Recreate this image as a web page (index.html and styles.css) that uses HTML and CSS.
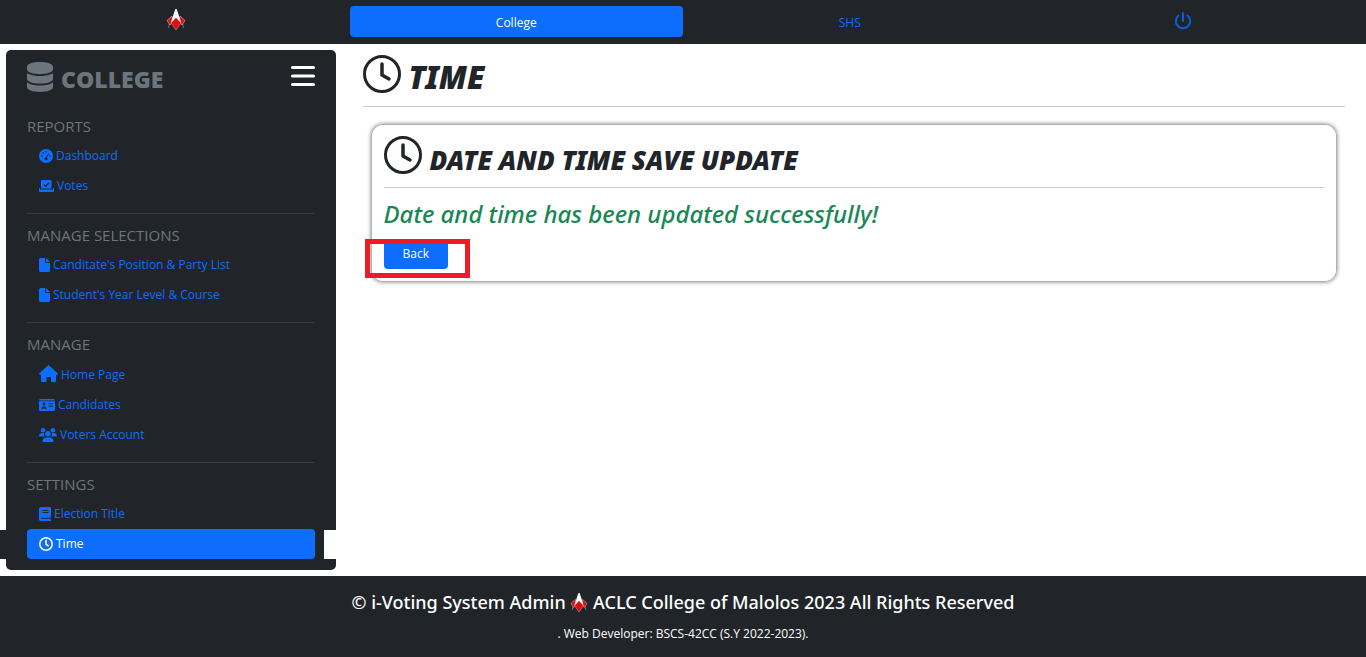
FILE: index.html
```html
<!DOCTYPE html>
<html lang="en">
<head>
<meta charset="utf-8">
<meta name="viewport" content="width=device-width, initial-scale=1">
<title>i-Voting System Admin</title>
<link rel="stylesheet" href="styles.css">
</head>
<body>
<svg class="sprite" aria-hidden="true">
  <symbol id="logo" viewBox="0 0 20 22">
    <path fill="none" stroke="#7f868d" stroke-width=".8" d="M4 13 2.300 19M16 13l1.700 6"/>
    <path fill="#d90f12" stroke="#f0d4d5" stroke-width=".5" d="M1 11.500 6 7l1 5-3 4zM19 11.500 14 7l-1 5 3 4z"/>
    <path fill="#f6f8fb" d="M9.300 0h1.400L15 13l-2 .5-3-4-3 4-2-.5z"/>
    <path fill="#e00c10" stroke="#f3c9ca" stroke-width=".4" d="M10 8.500 15 14l-5 7-5-7z"/>
  </symbol>
  <symbol id="clock" viewBox="0 0 38 38">
    <circle cx="19" cy="19" r="17.500" fill="none" stroke="currentColor" stroke-width="3"/>
    <path fill="none" stroke="currentColor" stroke-width="3.500" stroke-linecap="round" stroke-linejoin="round" d="M19 9v11l7 4"/>
  </symbol>
</svg>

<header class="topbar">
  <a class="topbar-link topbar-brand" href="#" aria-label="Home"><svg class="logo"><use href="#logo"/></svg></a>
  <a class="topbar-link is-active" href="#">College</a>
  <a class="topbar-link" href="#">SHS</a>
  <a class="topbar-link topbar-power" href="#" aria-label="Log out">
    <svg class="power" viewBox="0 0 18 18" fill="none" stroke="currentColor" stroke-width="2" stroke-linecap="round"><path d="M9 1v8M4.500 3.500a7.200 7.200 0 1 0 9 0"/></svg>
  </a>
</header>

<div class="layout">
  <aside class="sidebar">
    <div class="sidebar-head">
      <svg class="database" viewBox="0 0 448 512" fill="currentColor" preserveAspectRatio="none"><path d="M448 80v48c0 44.200-100.300 80-224 80S0 172.200 0 128V80C0 35.800 100.300 0 224 0s224 35.800 224 80zM393.200 214.700c20.800-7.400 39.900-16.900 54.800-28.600V288c0 44.200-100.300 80-224 80S0 332.200 0 288V186.100c14.900 11.800 34 21.200 54.800 28.600C99.700 230.700 159.500 240 224 240s124.300-9.300 169.200-25.300zM0 346.100c14.900 11.800 34 21.200 54.800 28.600C99.700 390.700 159.500 400 224 400s124.300-9.300 169.200-25.300c20.800-7.400 39.900-16.900 54.800-28.600V432c0 44.200-100.300 80-224 80S0 476.200 0 432v-85.900z"/></svg>
      <h2 class="sidebar-title">COLLEGE</h2>
      <button class="menu-button" type="button" aria-label="Toggle menu">
        <svg class="menu-icon" viewBox="0 0 24 20" stroke="currentColor" stroke-width="3" stroke-linecap="round"><path d="M1.500 1.500h21M1.500 10h21M1.500 18.500h21"/></svg>
      </button>
    </div>

    <nav>
      <section class="group">
        <h3 class="group-title">REPORTS</h3>
        <a class="item" href="#"><svg class="icon" viewBox="0 0 14 14"><circle cx="7" cy="7" r="7" fill="currentColor"/><path fill="none" stroke="#212529" stroke-linecap="round" d="M7 9.500 9.500 5"/><g fill="#212529"><circle cx="7" cy="9.800" r="1.500"/><circle cx="3" cy="7" r=".8"/><circle cx="4.300" cy="4" r=".8"/><circle cx="7" cy="2.700" r=".8"/><circle cx="11" cy="7" r=".8"/></g></svg>Dashboard</a>
        <a class="item" href="#"><svg class="icon icon-mid" viewBox="0 0 15 12"><path fill="currentColor" d="M3 0h8.500q1 0 1 1v7.500H2V1q0-1 1-1zM0 8h1v1.500h13V8h1v3q0 1-1 1H1q-1 0-1-1z"/><path fill="none" stroke="#212529" stroke-width="1.300" d="m5 4.500 1.700 1.800L10 2.800"/></svg>Votes</a>
      </section>
      <section class="group">
        <h3 class="group-title">MANAGE SELECTIONS</h3>
        <a class="item" href="#"><svg class="icon icon-narrow" viewBox="0 0 11 14"><path fill="currentColor" d="M1.500 0H6v4q0 1 1 1h4v7.500q0 1.500-1.500 1.500h-8Q0 14 0 12.500v-11Q0 0 1.500 0zM7 0l4 4H7z"/></svg>Canditate's Position &amp; Party List</a>
        <a class="item" href="#"><svg class="icon icon-narrow" viewBox="0 0 11 14"><path fill="currentColor" d="M1.500 0H6v4q0 1 1 1h4v7.500q0 1.500-1.500 1.500h-8Q0 14 0 12.500v-11Q0 0 1.500 0zM7 0l4 4H7z"/></svg>Student's Year Level &amp; Course</a>
      </section>
      <section class="group">
        <h3 class="group-title">MANAGE</h3>
        <a class="item" href="#"><svg class="icon icon-home" viewBox="0 0 19 19"><path fill="currentColor" d="M9.500 0 19 8.500q0 1.300-1 1.300h-1V17h-5v-5H7.500v5H2V9.800H1q-1 0-1-1.300z"/></svg>Home Page</a>
        <a class="item" href="#"><svg class="icon icon-card" viewBox="0 0 16 12"><path fill="currentColor" d="M1.500 0h13Q16 0 16 1.500H0Q0 0 1.500 0zM0 2.300h16v8.200q0 1.500-1.500 1.500h-13Q0 12 0 10.500z"/><g fill="#212529"><circle cx="5" cy="5" r="1.400"/><path d="M2.300 9.700Q2.300 7.200 5 7.200t2.700 2.500zM9.500 4.200H14v1H9.500zM9.500 6.700H14v1H9.500z"/></g></svg>Candidates</a>
        <a class="item" href="#"><svg class="icon icon-wide" viewBox="0 0 18 14" fill="currentColor"><circle cx="4" cy="2.200" r="2.200"/><circle cx="14" cy="2.200" r="2.200"/><circle cx="9" cy="5.800" r="2.700"/><path d="M0 8.500Q0 5 3 5h2q-.5 2 1 3.500zM18 8.500Q18 5 15 5h-2q.5 2-1 3.500zM3.500 14Q3.500 9.500 7 9.500h4q3.500 0 3.500 4.500z"/></svg>Voters Account</a>
      </section>
      <section class="group">
        <h3 class="group-title">SETTINGS</h3>
        <a class="item" href="#"><svg class="icon icon-book" viewBox="0 0 12 14"><path fill="currentColor" d="M2 0h9q1 0 1 1v8q0 1-.7 1v2.500H12V14H2q-2 0-2-2V2q0-2 2-2z"/><path stroke="#212529" d="M3.500 3.500h6M3.500 5.500h6M2 11.300h9"/></svg>Election Title</a>
        <a class="item is-active" href="#" aria-current="page"><svg class="icon" viewBox="0 0 14 14" fill="none" stroke="currentColor" stroke-width="1.500" stroke-linecap="round"><circle cx="7" cy="7" r="6.200"/><path d="M7 3.300v4l2.300 1.500"/></svg>Time</a>
      </section>
    </nav>
  </aside>

  <main class="content">
    <h1 class="page-title"><svg class="title-icon"><use href="#clock"/></svg>TIME</h1>
    <section class="card">
      <h2 class="card-title"><svg class="title-icon"><use href="#clock"/></svg>DATE AND TIME SAVE UPDATE</h2>
      <p class="message">Date and time has been updated successfully!</p>
      <div class="actions"><button class="back" type="button">Back</button></div>
    </section>
  </main>
</div>

<footer class="footer">
  <p class="copyright">© i-Voting System Admin <svg class="logo"><use href="#logo"/></svg> ACLC College of Malolos 2023 All Rights Reserved</p>
  <p class="credit">. Web Developer: BSCS-42CC (S.Y 2022-2023).</p>
</footer>
</body>
</html>
```
FILE: styles.css
```css
:root {
  --dark: #212529;
  --blue: #0d6efd;
  --muted: #6c757d;
}

*, *::before, *::after { box-sizing: border-box; }

body {
  margin: 0;
  min-height: 100vh;
  display: flex;
  flex-direction: column;
  background: #fff;
  color: var(--dark);
  font-family: "Open Sans", "Noto Sans", sans-serif;
  font-size: 12px;
  line-height: 18px;
}

h1, h2, h3, p { margin: 0; }
a { text-decoration: none; }
svg { flex: none; }
.sprite { position: absolute; width: 0; height: 0; }

.topbar {
  display: grid;
  grid-template-columns: repeat(4, 1fr);
  padding: 6px 16px 7px;
  background: var(--dark);
}

.topbar-link {
  display: flex;
  align-items: center;
  justify-content: center;
  height: 31px;
  padding-top: 2px;
  border-radius: 4px;
  color: var(--blue);
}

.is-active { background: var(--blue); color: #fff; }
.topbar-brand { align-items: flex-start; padding-top: 3px; padding-right: 14px; }
.topbar-power { color: #0b5ed7; padding-bottom: 3px; }
.logo { width: 20px; height: 22px; }
.power { width: 18px; height: 18px; }

.layout {
  flex: 1;
  display: grid;
  grid-template-columns: 25% 75%;
  align-items: start;
}

.sidebar {
  margin: 6px;
  padding: 11px 21px;
  border-radius: 5px;
  background: var(--dark);
}

.sidebar-head {
  display: flex;
  align-items: center;
  height: 32px;
  margin-bottom: 24px;
  color: var(--muted);
}

.database { width: 26px; height: 30px; margin-right: 8px; }
.sidebar-title { font-size: 23px; font-weight: 800; line-height: 32px; padding-top: 3px; }

.menu-button {
  margin-left: auto;
  padding: 0 0 3px;
  border: 0;
  background: none;
  color: #fff;
}

.menu-icon { display: block; width: 24px; height: 20px; }

.group + .group {
  margin-top: 12px;
  padding-top: 12px;
  border-top: 1px solid #373b3e;
}

.group-title {
  margin-bottom: 6px;
  color: var(--muted);
  font-size: 15px;
  font-weight: 400;
  line-height: 18px;
}

.item {
  position: relative;
  display: flex;
  align-items: center;
  gap: 3px;
  padding: 6px 12px;
  border-radius: 4px;
  color: var(--blue);
}

.item.is-active { color: #fff; }

/* Strips on both sides of the selected row, over the panel edges */
.item.is-active::before,
.item.is-active::after {
  content: "";
  position: absolute;
  top: 1px;
  bottom: 0;
}

.item.is-active::before { left: -27px; width: 6px; background: var(--dark); }
.item.is-active::after { right: -21px; width: 12px; background: #fff; }

.icon { width: 14px; height: 14px; }
.icon-mid { width: 15px; height: 12px; }
.icon-narrow { width: 11px; }
.icon-book { width: 12px; }
.icon-home { width: 19px; height: 19px; }
.icon-card { width: 16px; height: 12px; }
.icon-wide { width: 18px; }

.content { padding: 11px 21px; }

.page-title, .card-title {
  display: flex;
  align-items: flex-end;
  gap: 8px;
  padding-bottom: 13px;
  border-bottom: 1px solid #c7c8c9;
  font-family: "Noto Sans", "Open Sans", sans-serif;
  font-style: italic;
  font-weight: 900;
}

.title-icon { width: 38px; height: 38px; }
.page-title { font-size: 31px; line-height: 32px; }
.card-title { font-size: 26px; line-height: 28px; }

.card {
  margin: 17px 8px;
  padding: 12px 13px 13px;
  border-radius: 12px;
  box-shadow: inset 0 0 0 1px #b0b0b0, 0 0 4px #808080;
}

.message {
  padding-top: 11px;
  color: #198754;
  font-family: "Noto Sans", "Open Sans", sans-serif;
  font-size: 24px;
  font-style: italic;
  font-weight: 500;
  line-height: 30px;
}

.actions { position: relative; display: flex; padding-top: 10px; }

.back {
  height: 30px;
  padding: 0 19px;
  border: 0;
  border-radius: 4px;
  background: var(--blue);
  color: #fff;
  font: inherit;
}

/* Highlight frame round the button */
.actions::after {
  content: "";
  position: absolute;
  left: -19px;
  bottom: -9px;
  width: 105px;
  height: 39px;
  border: 5px solid #ed1c24;
}

.footer {
  padding: 13px 16px 14px;
  background: var(--dark);
  color: #fff;
  text-align: center;
}

.copyright {
  font-family: "Noto Sans", "Open Sans", sans-serif;
  font-size: 18px;
  font-weight: 500;
  line-height: 26px;
}

.copyright .logo { width: 18px; height: 20px; vertical-align: -4px; }
.credit { padding-top: 10px; }
```
